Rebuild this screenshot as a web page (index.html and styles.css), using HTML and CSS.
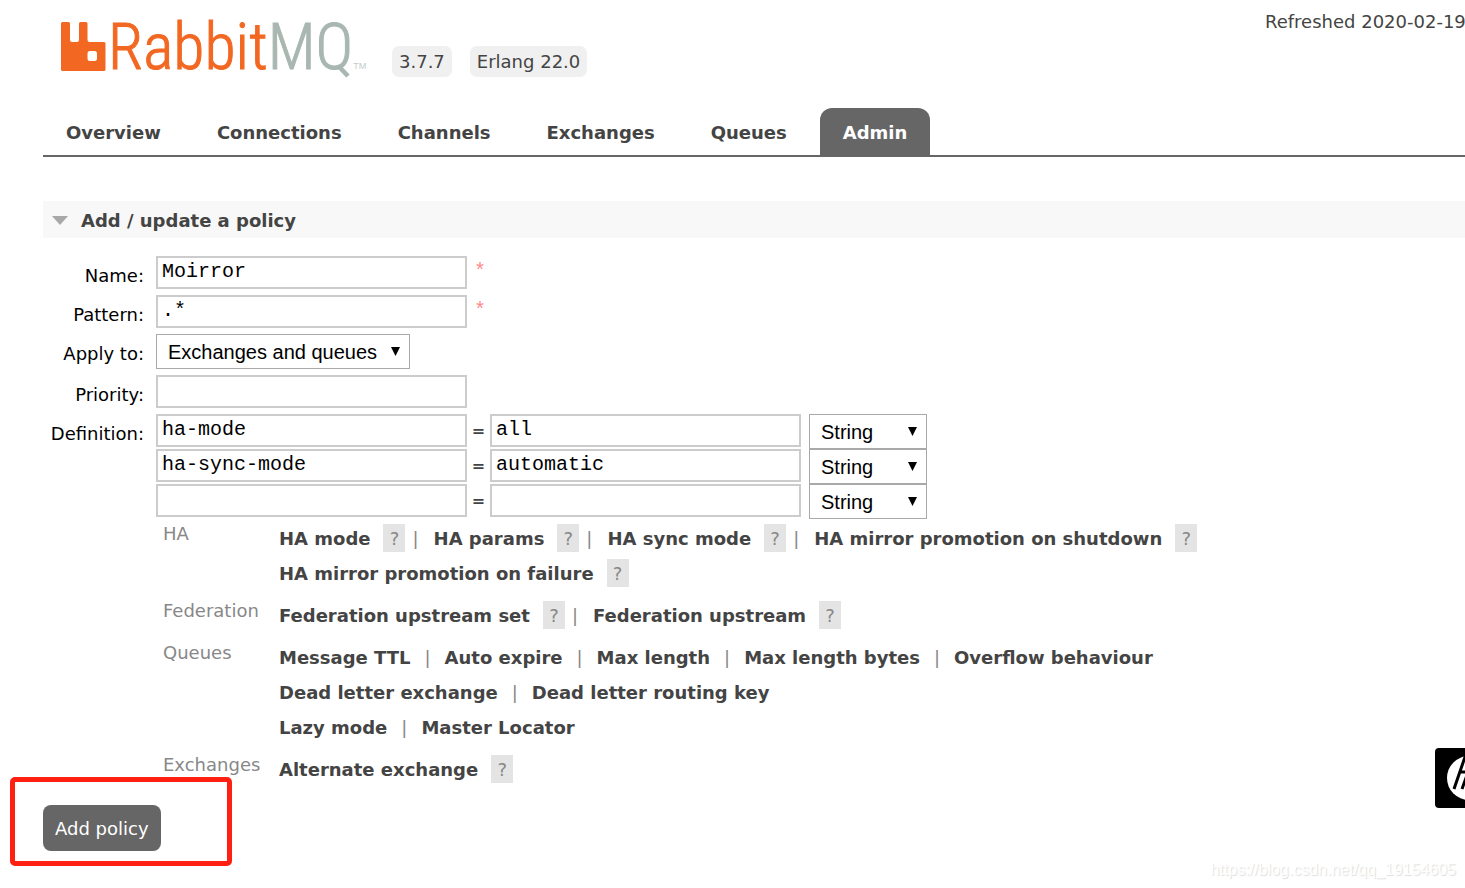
FILE: index.html
```html
<!DOCTYPE html>
<html lang="en">
<head>
<meta charset="utf-8">
<title>RabbitMQ Management</title>
<link rel="stylesheet" href="styles.css">
</head>
<body>
<header class="header">
  <a class="logo" href="#" aria-label="RabbitMQ">
    <svg class="logo-mark" viewBox="0 0 45 49" aria-hidden="true"><path fill-rule="evenodd" d="M1.500 0H7.500Q9 0 9 1.500V18Q9 20 11 20H16Q18 20 18 18V1.500Q18 0 19.500 0H25Q26.500 0 26.500 1.500V18Q26.500 20 28.500 20H43Q44.500 20 44.500 21.500V47.500Q44.500 49 43 49H1.500Q0 49 0 47.500V1.500Q0 0 1.500 0ZM29 29Q26.500 29 26.500 31.500V36.500Q26.500 39 29 39H33.500Q36 39 36 36.500V31.500Q36 29 33.500 29Z"/></svg>
    <span class="wordmark">Rabbit<span class="wordmark-mq">MQ</span></span><span class="tm">TM</span>
  </a>
  <div class="versions"><span class="badge">3.7.7</span><span class="badge">Erlang 22.0</span></div>
  <div class="status">Refreshed 2020-02-19</div>
</header>
<main class="page">
  <nav class="tabs">
    <a class="tab" href="#">Overview</a>
    <a class="tab" href="#">Connections</a>
    <a class="tab" href="#">Channels</a>
    <a class="tab" href="#">Exchanges</a>
    <a class="tab" href="#">Queues</a>
    <a class="tab tab-active" href="#">Admin</a>
  </nav>
  <h2 class="section-title">Add / update a policy</h2>
  <form class="policy">
    <div class="fields">
      <label class="label" for="name">Name:</label>
      <div class="field"><input class="text" id="name" value="Moirror"><span class="required">*</span></div>
      <label class="label" for="pattern">Pattern:</label>
      <div class="field"><input class="text" id="pattern" value=".*"><span class="required">*</span></div>
      <label class="label" for="apply">Apply to:</label>
      <div class="field"><span class="select-wrap select-wide"><select class="select" id="apply"><option>Exchanges and queues</option></select></span></div>
      <label class="label" for="priority">Priority:</label>
      <div class="field"><input class="text" id="priority"></div>
      <label class="label" for="key1">Definition:</label>
      <div class="definition">
        <div class="field"><input class="text" id="key1" value="ha-mode"><span class="equals">=</span><input class="text" aria-label="Value 1" value="all"><span class="select-wrap select-type"><select class="select" aria-label="Type 1"><option>String</option></select></span></div>
        <div class="field"><input class="text" aria-label="Key 2" value="ha-sync-mode"><span class="equals">=</span><input class="text" aria-label="Value 2" value="automatic"><span class="select-wrap select-type"><select class="select" aria-label="Type 2"><option>String</option></select></span></div>
        <div class="field"><input class="text" aria-label="Key 3"><span class="equals">=</span><input class="text" aria-label="Value 3"><span class="select-wrap select-type"><select class="select" aria-label="Type 3"><option>String</option></select></span></div>
        <table class="hints">
          <tr><th>HA</th><td>
            <div class="line"><a href="#">HA mode</a><button type="button" class="help">?</button><i class="sep">|</i><a href="#">HA params</a><button type="button" class="help">?</button><i class="sep">|</i><a href="#">HA sync mode</a><button type="button" class="help">?</button><i class="sep">|</i><a href="#">HA mirror promotion on shutdown</a><button type="button" class="help">?</button></div>
            <div class="line"><a href="#">HA mirror promotion on failure</a><button type="button" class="help">?</button></div>
          </td></tr>
          <tr><th>Federation</th><td>
            <div class="line"><a href="#">Federation upstream set</a><button type="button" class="help">?</button><i class="sep">|</i><a href="#">Federation upstream</a><button type="button" class="help">?</button></div>
          </td></tr>
          <tr><th>Queues</th><td>
            <div class="line"><a href="#">Message TTL</a><i class="sep">|</i><a href="#">Auto expire</a><i class="sep">|</i><a href="#">Max length</a><i class="sep">|</i><a href="#">Max length bytes</a><i class="sep">|</i><a href="#">Overflow behaviour</a></div>
            <div class="line"><a href="#">Dead letter exchange</a><i class="sep">|</i><a href="#">Dead letter routing key</a></div>
            <div class="line"><a href="#">Lazy mode</a><i class="sep">|</i><a href="#">Master Locator</a></div>
          </td></tr>
          <tr><th>Exchanges</th><td>
            <div class="line"><a href="#">Alternate exchange</a><button type="button" class="help">?</button></div>
          </td></tr>
        </table>
      </div>
    </div>
    <div class="submit-row"><button type="button" class="submit">Add policy</button><span class="highlight"></span></div>
  </form>
</main>
<svg class="hp" viewBox="0 0 60 60" aria-hidden="true"><rect width="60" height="60" rx="4"/><circle cx="34" cy="30" r="22" fill="#fff"/><path fill="none" stroke="#000" stroke-width="3" d="M31 6L19 41M25 24H30Q33 24 32 27L27 41M37 54L47 23H52Q55 23 54 26L50 37Q49 39 46 39H43"/></svg>
<div class="watermark">https://blog.csdn.net/qq_19154605</div>
</body>
</html>
```
FILE: styles.css
```css
* { box-sizing: border-box; }
html { height: 100%; overflow: hidden; }
body {
  position: relative;
  min-height: 100%;
  margin: 0;
  overflow: hidden;
  background: #fff;
  color: #444;
  font: 18px/24px "DejaVu Sans", Verdana, sans-serif;
}
a { color: #444; text-decoration: none; }
.header { display: flex; align-items: flex-start; height: 108px; padding-left: 61px; }
.logo { display: flex; padding-top: 22px; width: 312px; }
.logo-mark { flex: none; width: 45px; height: 49px; fill: #f26822; }
.wordmark {
  margin-left: 2px;
  color: #f26822;
  font: 300 64px/52px "Roboto Condensed", "Open Sans Condensed", sans-serif;
  -webkit-text-stroke: 1px;
}
.wordmark-mq { color: #a9b7b1; }
.tm { padding-top: 38px; color: #c3ccc8; font: 9px/12px "Liberation Sans", sans-serif; }
.versions { display: flex; gap: 18px; padding: 46px 0 0 19px; }
.badge { padding: 4px 7px 3px; border-radius: 7px; background: #f0f0f0; white-space: nowrap; }
.status { width: 200px; margin-left: auto; padding-top: 10px; white-space: nowrap; overflow: hidden; }

.page { padding-left: 43px; }
.tabs { display: flex; gap: 10px; border-bottom: 2px solid #666; }
.tab { padding: 13px 23px 10px; font-weight: bold; border-radius: 12px 12px 0 0; }
.tab-active { background: #666; color: #fff; }
.section-title {
  display: flex;
  align-items: center;
  gap: 13px;
  height: 37px;
  margin: 44px 0 18px;
  padding: 2px 0 0 9px;
  background: #f8f8f8;
  font-size: 18px;
}
.section-title::before { content: ""; width: 16px; height: 9px; background: #a8a8a8; clip-path: polygon(0 0, 100% 0, 50% 100%); }

.fields { display: grid; grid-template-columns: 101px 1fr; column-gap: 12px; row-gap: 6px; }
.label { padding-top: 8px; color: #000; text-align: right; white-space: nowrap; }
.field { display: flex; align-items: flex-start; }
.text {
  width: 311px;
  height: 33px;
  padding: 0 4px 2px;
  border: 2px solid #ccc;
  background: #fff;
  color: #000;
  font: 20px "Liberation Mono", monospace;
}
.required { margin-left: 7px; padding-top: 4px; color: #f88; font: 20px/24px "Liberation Mono", monospace; }
.equals { width: 23px; padding-top: 5px; text-align: center; font-weight: bold; font-size: 16px; }
.select-wrap { position: relative; }
.select-wrap::after {
  content: "";
  position: absolute;
  top: 13px;
  right: 10px;
  width: 9px;
  height: 9px;
  background: #000;
  clip-path: polygon(0 0, 100% 0, 50% 100%);
  pointer-events: none;
}
.select-wide { width: 254px; }
.select-type { width: 118px; margin-left: 8px; }
.select {
  display: block;
  width: 100%;
  height: 35px;
  padding: 0 11px;
  border: 1px solid #a9a9a9;
  border-radius: 0;
  appearance: none;
  background: #fff;
  color: #000;
  font: 20px "Liberation Sans", Arial, sans-serif;
}

.hints { margin-top: 5px; border-collapse: collapse; }
.hints th { width: 123px; padding: 0 0 0 7px; color: #888; font-weight: normal; text-align: left; vertical-align: top; line-height: 20px; }
.hints td { padding: 0 0 7px; }
.line { display: flex; height: 35px; line-height: 30px; white-space: nowrap; }
.line a { font-weight: bold; }
.help {
  width: 22px;
  height: 28px;
  margin-left: 13px;
  padding: 0;
  border: 0;
  background: #e4e4e4;
  color: #888;
  font: 18px "DejaVu Sans", Verdana, sans-serif;
}
.sep { margin: 0 14px; color: #888; font-style: normal; }
.help + .sep { margin: 0 15px 0 7px; }

.submit-row { position: relative; display: flex; margin-top: 8px; }
.submit {
  height: 46px;
  padding: 0 12px;
  border: 0;
  border-radius: 8px;
  background: #666;
  color: #fff;
  font: 18px "DejaVu Sans", Verdana, sans-serif;
}
.highlight {
  position: absolute;
  top: -28px;
  left: -33px;
  width: 222px;
  height: 89px;
  border: 5px solid #ff2012;
  border-radius: 5px;
  pointer-events: none;
}
.hp { position: absolute; top: 748px; right: -30px; width: 60px; height: 60px; }
.watermark { position: absolute; right: 9px; bottom: 8px; color: #fff; font: 16px/20px "Liberation Sans", Arial, sans-serif; text-shadow: 1px 1px 1px #ddd; }
```
